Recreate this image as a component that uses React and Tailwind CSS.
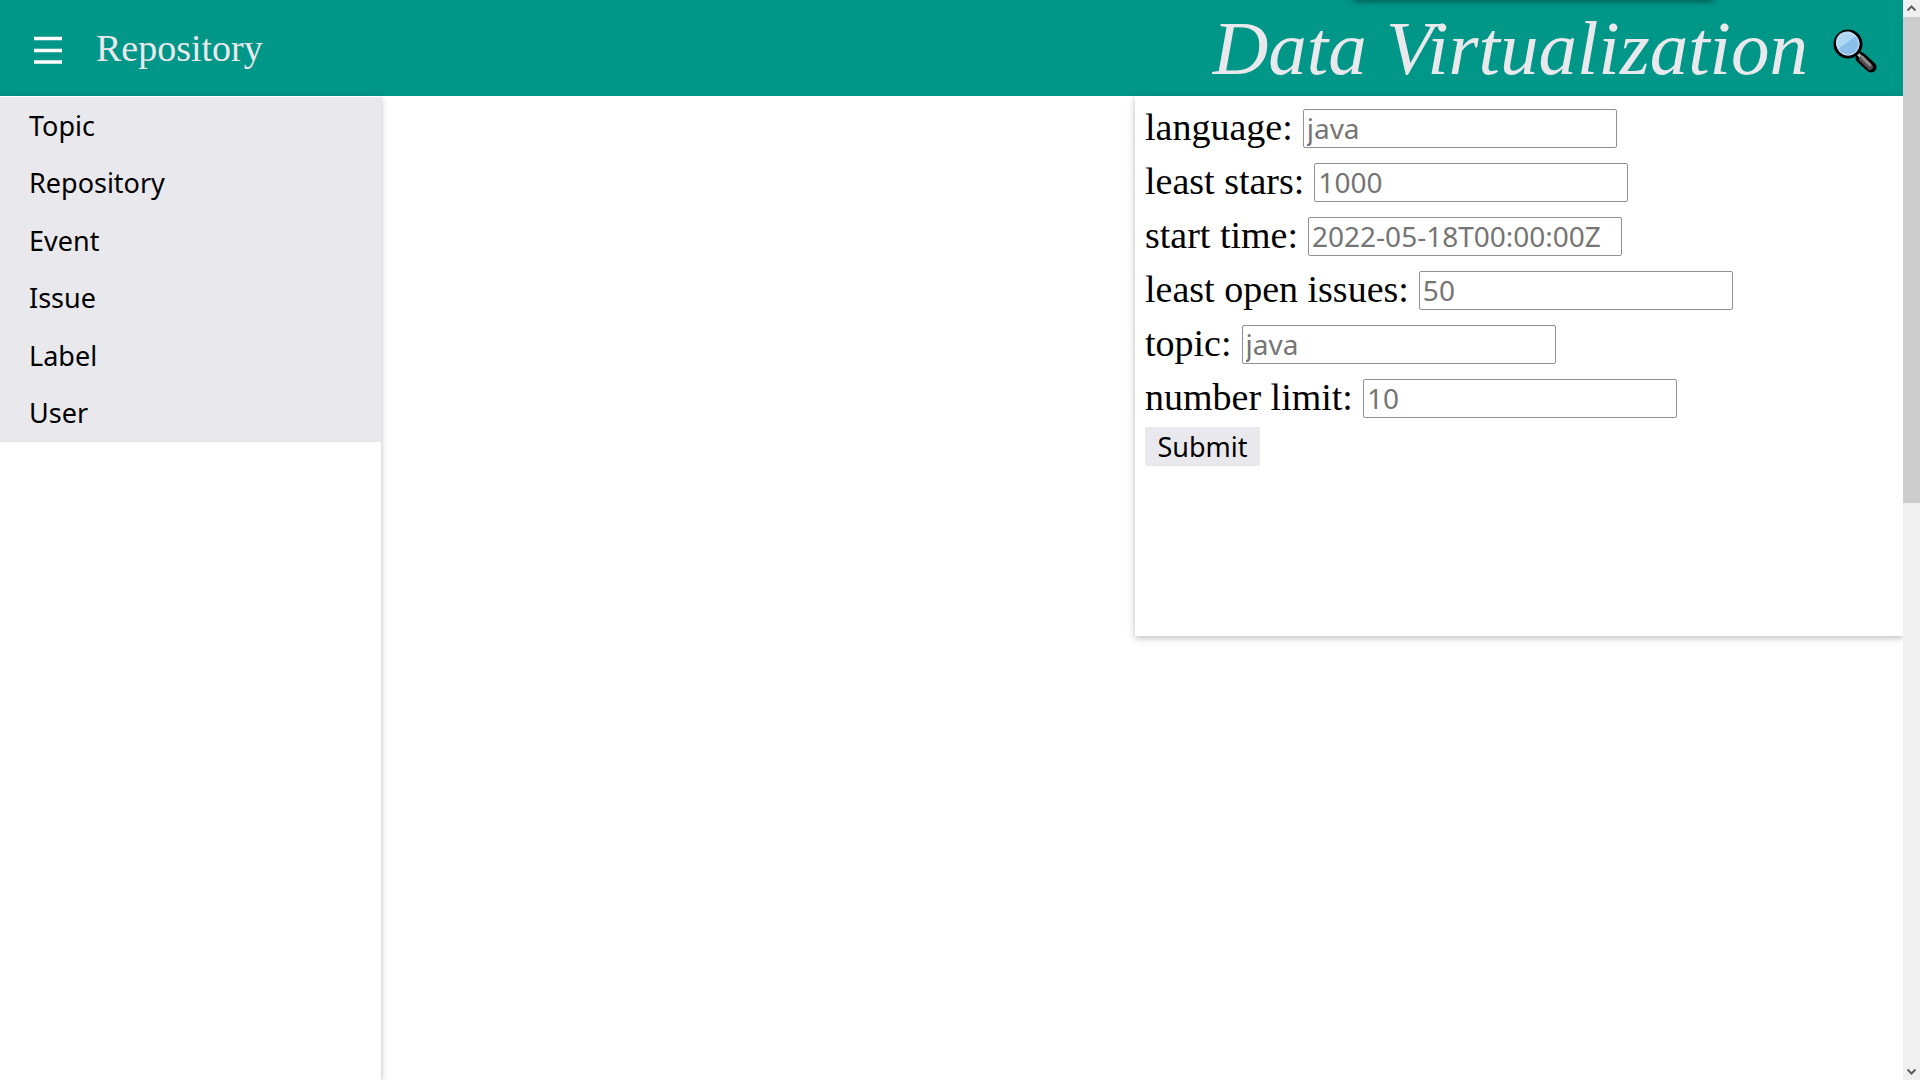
import React from 'react';

const serif = "font-['Liberation_Serif',serif]";
const cardShadow = 'shadow-[0_2px_5px_0_rgba(0,0,0,0.16),0_2px_10px_0_rgba(0,0,0,0.12)]';

const links = ['Topic', 'Repository', 'Event', 'Issue', 'Label', 'User'];

const fields = [
  { id: 'language', label: 'language:', hint: 'java' },
  { id: 'stars', label: 'least stars:', hint: '1000' },
  { id: 'start', label: 'start time:', hint: '2022-05-18T00:00:00Z' },
  { id: 'issues', label: 'least open issues:', hint: '50' },
  { id: 'topic', label: 'topic:', hint: 'java' },
  { id: 'limit', label: 'number limit:', hint: '10' },
];

function Magnifier() {
  return (
    <svg width="44" height="44" viewBox="0 0 44 44" aria-hidden="true">
      <path d="M25 25 L30 29" stroke="#000" strokeWidth="7" />
      <path d="M28 29 L38 38" stroke="#000" strokeWidth="11" strokeLinecap="round" />
      <path d="M24 24 L30 30" stroke="#b9b9b9" strokeWidth="3" />
      <path d="M29 30 L37 38" stroke="#4f4f4f" strokeWidth="6" strokeLinecap="round" />
      <path d="M29 28 L37 36" stroke="#8c8c8c" strokeWidth="3" strokeLinecap="round" />
      <circle cx="15" cy="15" r="13" fill="#8abfec" stroke="#000" strokeWidth="3" />
      <path d="M5 20 A11 11 0 0 1 23 7 Z" fill="#add8f3" />
      <circle cx="15" cy="15" r="11" fill="none" stroke="#cddff0" strokeWidth="1" />
    </svg>
  );
}

function Header() {
  return (
    <header className="relative flex h-24 shrink-0 items-center bg-[#009688] text-[#e9e9ed]">
      <button type="button" aria-label="Menu" className="mt-1 ml-[34px] text-white">
        <svg width="28" height="28" viewBox="0 0 28 28" aria-hidden="true">
          <path d="M0 2.5h28M0 14.5h28M0 26h28" stroke="currentColor" strokeWidth="3.4" />
        </svg>
      </button>
      <span className="ml-[34px] text-[38px] leading-[44px]">Repository</span>
      <h1 className="mr-[25px] ml-auto text-[77px] leading-[88px] italic">Data Virtualization</h1>
      <button type="button" aria-label="Search" className="mt-[6px] mr-[26px]">
        <Magnifier />
      </button>
      <div className="absolute -top-2 right-[190px] h-2 w-[358px] shadow-[0_0_6px_1px_rgba(0,0,0,0.5)]" />
    </header>
  );
}

function Sidebar() {
  return (
    <nav className={`relative w-1/5 bg-white pt-px ${cardShadow}`}>
      <ul className="grid h-[345px] grid-rows-6 bg-[#e9e9ed] font-['Noto_Sans',sans-serif] text-[27px] leading-9">
        {links.map((name) => (
          <li key={name} className="flex">
            <button type="button" className="flex w-full items-center px-[29px] text-left">{name}</button>
          </li>
        ))}
      </ul>
    </nav>
  );
}

function FilterPanel() {
  return (
    <form
      onSubmit={(e) => e.preventDefault()}
      className={`relative ml-auto h-[540px] w-[768px] bg-white px-[10px] pt-1 ${cardShadow}`}
    >
      {fields.map((f) => (
        <div key={f.id} className="flex h-[54px] items-center gap-[10px]">
          <label htmlFor={f.id} className="text-[38px] leading-[44px]">{f.label}</label>
          <input
            id={f.id}
            type="text"
            placeholder={f.hint}
            className="mt-[2px] h-[39px] w-[314px] rounded-[2px] border border-[#8f8f9d] bg-white px-[3px] font-['Noto_Sans',sans-serif] text-[28px] leading-9 placeholder:text-[#757575]"
          />
        </div>
      ))}
      <button
        type="submit"
        className="mt-[3px] flex h-[39px] w-[115px] items-center justify-center bg-[#e9e9ed] font-['Noto_Sans',sans-serif] text-[27px] leading-9"
      >
        Submit
      </button>
    </form>
  );
}

function Scrollbar() {
  return (
    <div className="flex w-[17px] shrink-0 flex-col bg-[#f0f0f0]" aria-hidden="true">
      <div className="flex h-[17px] items-center justify-center">
        <svg width="9" height="7" viewBox="0 0 9 7">
          <path d="M0.5 5.5L4.5 1.5L8.5 5.5" fill="none" stroke="#606060" strokeWidth="2" />
        </svg>
      </div>
      <div className="flex-[13] bg-[#cdcdcd]" />
      <div className="flex-[15]" />
      <div className="flex h-[17px] items-center justify-center">
        <svg width="9" height="7" viewBox="0 0 9 7">
          <path d="M0.5 1.5L4.5 5.5L8.5 1.5" fill="none" stroke="#606060" strokeWidth="2" />
        </svg>
      </div>
    </div>
  );
}

export default function App() {
  return (
    <div className={`flex h-screen overflow-hidden bg-white text-black ${serif}`}>
      <div className="flex min-w-0 flex-1 flex-col overflow-hidden">
        <Header />
        <main className="flex flex-1">
          <Sidebar />
          <div className="flex-1">
            <FilterPanel />
          </div>
        </main>
      </div>
      <Scrollbar />
    </div>
  );
}
